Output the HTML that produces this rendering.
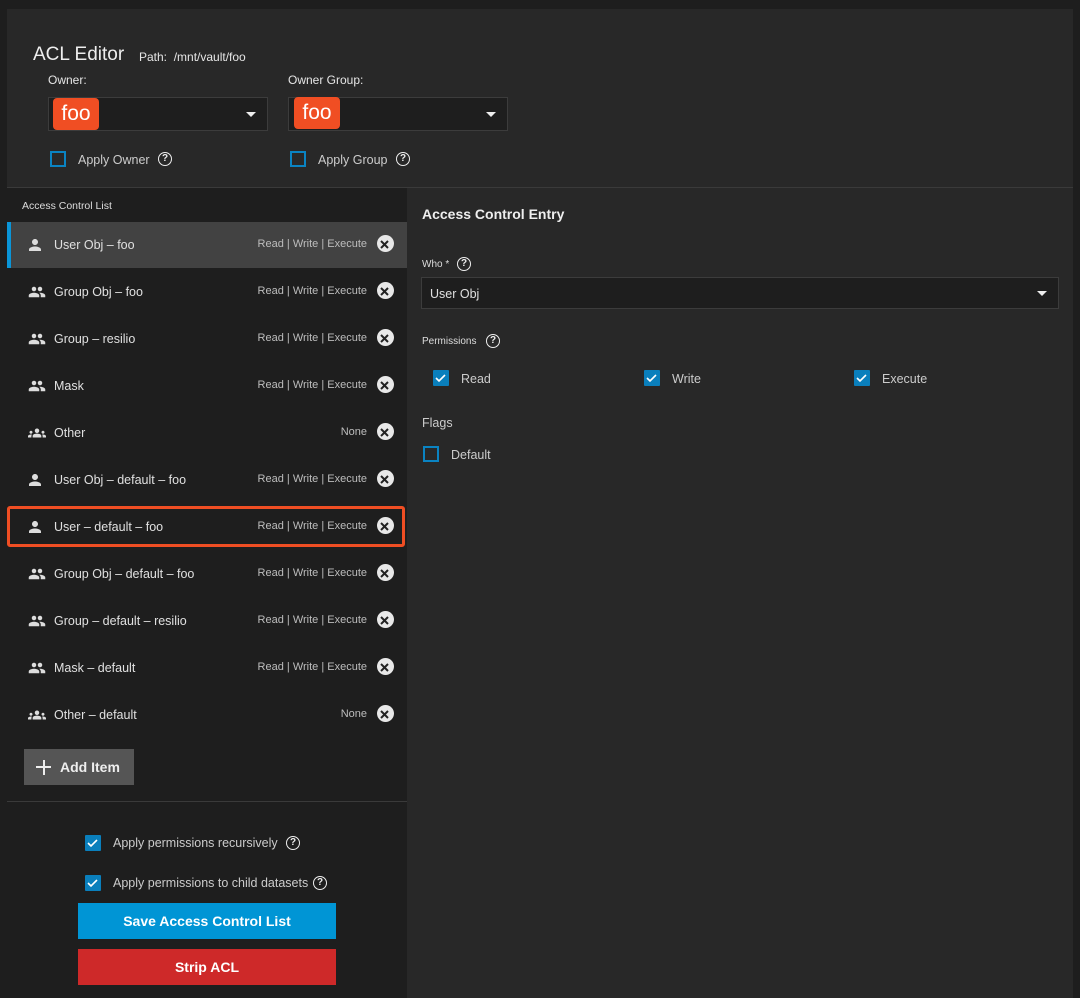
<!DOCTYPE html>
<html><head><meta charset="utf-8"><style>
*{box-sizing:border-box;margin:0;padding:0}
body{width:1080px;height:998px;background:#1e1e1e;font-family:"Liberation Sans",sans-serif;color:#e6e6e6;position:relative;overflow:hidden}
.a{position:absolute}
.panel{left:7px;top:9px;width:1066px;height:989px;background:#282828}
.sep{left:7px;top:187px;width:1066px;height:1px;background:#3a3a3a}
.left{left:7px;top:188px;width:400px;height:810px;background:#1e1e1e}
.sel{background:#1e1e1e;border:1px solid #3c3c3c}
.chip{background:#f04e23;color:#fff;font-size:21px;border-radius:4px;text-align:center;line-height:32px}
.cb{width:16px;height:16px;border:2px solid #0a83c2}
.cbc{width:16px;height:16px;background:#0a7fbc;border-radius:1px}
.row{left:7px;width:400px;height:46px;font-size:12.5px}
.row .ic{position:absolute;left:19px;top:14px}
.row .t{position:absolute;left:47px;top:16px;color:#e0e0e0}
.row .p{position:absolute;right:40px;top:16px;font-size:11px;color:#bdbdbd}
.row .x{position:absolute;right:13px;top:13px;width:17px;height:17px;border-radius:50%;background:#e8e8e8}
.q{width:14px;height:14px;border:1.6px solid #eee;border-radius:50%;font-size:10px;font-weight:bold;text-align:center;line-height:11px;color:#eee}
</style></head><body>
<div class="a panel"></div>
<div class="a" style="left:33px;top:44px;font-size:19px;color:#eee">ACL Editor</div>
<div class="a" style="left:139px;top:50px;font-size:12px">Path:&nbsp; /mnt/vault/foo</div>
<div class="a" style="left:48px;top:73px;font-size:12px">Owner:</div>
<div class="a" style="left:288px;top:73px;font-size:12px">Owner Group:</div>
<div class="a sel" style="left:48px;top:97px;width:220px;height:34px"></div>
<div class="a chip" style="left:53px;top:98px;width:46px;height:32px">foo</div>
<div class="a" style="left:246px;top:112px;border-left:5px solid transparent;border-right:5px solid transparent;border-top:5px solid #eee"></div>
<div class="a sel" style="left:288px;top:97px;width:220px;height:34px"></div>
<div class="a chip" style="left:294px;top:97px;width:46px;height:32px">foo</div>
<div class="a" style="left:486px;top:112px;border-left:5px solid transparent;border-right:5px solid transparent;border-top:5px solid #eee"></div>
<div class="a cb" style="left:50px;top:151px"></div>
<div class="a" style="left:78px;top:153px;font-size:12.5px;color:#ccc">Apply Owner</div>
<div class="a q" style="left:158px;top:152px">?</div>
<div class="a cb" style="left:290px;top:151px"></div>
<div class="a" style="left:318px;top:153px;font-size:12.5px;color:#ccc">Apply Group</div>
<div class="a q" style="left:396px;top:152px">?</div>
<div class="a sep"></div>
<div class="a left"></div>
<div class="a" style="left:22px;top:200px;font-size:10.5px;color:#ddd">Access Control List</div>

<div class="a row" style="top:222px;background:#424242"><div class="a" style="left:0;top:0;width:4px;height:46px;background:#0a95d8"></div><svg class="ic" width="18" height="18" viewBox="0 0 24 24"><path fill="#ddd" d="M12 12c2.2 0 4-1.8 4-4s-1.8-4-4-4-4 1.8-4 4 1.8 4 4 4zm0 2c-2.7 0-8 1.3-8 4v2h16v-2c0-2.7-5.3-4-8-4z"/></svg><span class="t">User Obj – foo</span><span class="p">Read | Write | Execute</span><span class="x"></span></div>

<div id="rows"></div>
<script></script>

<div class="a row" style="top:269px"><svg class="ic" width="22" height="18" viewBox="0 0 24 24"><path fill="#ddd" d="M16 11c1.7 0 3-1.3 3-3s-1.3-3-3-3-3 1.3-3 3 1.3 3 3 3zm-8 0c1.7 0 3-1.3 3-3S9.7 5 8 5 5 6.3 5 8s1.3 3 3 3zm0 2c-2.3 0-7 1.2-7 3.5V19h14v-2.5C15 14.2 10.3 13 8 13zm8 0c-.3 0-.6 0-1 .1 1.2.8 2 2 2 3.4V19h6v-2.5c0-2.3-4.7-3.5-7-3.5z"/></svg><span class="t">Group Obj – foo</span><span class="p">Read | Write | Execute</span><span class="x"></span></div>
<div class="a row" style="top:316px"><svg class="ic" width="22" height="18" viewBox="0 0 24 24"><path fill="#ddd" d="M16 11c1.7 0 3-1.3 3-3s-1.3-3-3-3-3 1.3-3 3 1.3 3 3 3zm-8 0c1.7 0 3-1.3 3-3S9.7 5 8 5 5 6.3 5 8s1.3 3 3 3zm0 2c-2.3 0-7 1.2-7 3.5V19h14v-2.5C15 14.2 10.3 13 8 13zm8 0c-.3 0-.6 0-1 .1 1.2.8 2 2 2 3.4V19h6v-2.5c0-2.3-4.7-3.5-7-3.5z"/></svg><span class="t">Group – resilio</span><span class="p">Read | Write | Execute</span><span class="x"></span></div>
<div class="a row" style="top:363px"><svg class="ic" width="22" height="18" viewBox="0 0 24 24"><path fill="#ddd" d="M16 11c1.7 0 3-1.3 3-3s-1.3-3-3-3-3 1.3-3 3 1.3 3 3 3zm-8 0c1.7 0 3-1.3 3-3S9.7 5 8 5 5 6.3 5 8s1.3 3 3 3zm0 2c-2.3 0-7 1.2-7 3.5V19h14v-2.5C15 14.2 10.3 13 8 13zm8 0c-.3 0-.6 0-1 .1 1.2.8 2 2 2 3.4V19h6v-2.5c0-2.3-4.7-3.5-7-3.5z"/></svg><span class="t">Mask</span><span class="p">Read | Write | Execute</span><span class="x"></span></div>
<div class="a row" style="top:410px"><svg class="ic" width="22" height="18" viewBox="0 0 24 24"><path fill="#ddd" d="M12 12.8c1.6 0 3.1.4 4.2.9 1 .5 1.6 1.4 1.6 2.5V18H6.2v-1.8c0-1.1.6-2 1.6-2.5 1.1-.5 2.5-.9 4.2-.9zM4 13c1.1 0 2-.9 2-2s-.9-2-2-2-2 .9-2 2 .9 2 2 2zm1.1 1.1C4.8 14 4.4 14 4 14c-1 0-1.9.2-2.8.6C.5 14.9 0 15.6 0 16.4V18h4.5v-1.6c0-.8.2-1.6.6-2.3zM20 13c1.1 0 2-.9 2-2s-.9-2-2-2-2 .9-2 2 .9 2 2 2zm4 3.4c0-.8-.5-1.5-1.2-1.8-.9-.4-1.8-.6-2.8-.6-.4 0-.8 0-1.1.1.4.7.6 1.5.6 2.3V18H24v-1.6zM12 6c1.7 0 3 1.3 3 3s-1.3 3-3 3-3-1.3-3-3 1.3-3 3-3z"/></svg><span class="t">Other</span><span class="p">None</span><span class="x"></span></div>
<div class="a row" style="top:457px"><svg class="ic" width="18" height="18" viewBox="0 0 24 24"><path fill="#ddd" d="M12 12c2.2 0 4-1.8 4-4s-1.8-4-4-4-4 1.8-4 4 1.8 4 4 4zm0 2c-2.7 0-8 1.3-8 4v2h16v-2c0-2.7-5.3-4-8-4z"/></svg><span class="t">User Obj – default – foo</span><span class="p">Read | Write | Execute</span><span class="x"></span></div>
<div class="a row" style="top:504px"><svg class="ic" width="18" height="18" viewBox="0 0 24 24"><path fill="#ddd" d="M12 12c2.2 0 4-1.8 4-4s-1.8-4-4-4-4 1.8-4 4 1.8 4 4 4zm0 2c-2.7 0-8 1.3-8 4v2h16v-2c0-2.7-5.3-4-8-4z"/></svg><span class="t">User – default – foo</span><span class="p">Read | Write | Execute</span><span class="x"></span></div>
<div class="a" style="left:7px;top:506px;width:398px;height:41px;border:3px solid #f04e23;border-radius:3px"></div>
<div class="a row" style="top:551px"><svg class="ic" width="22" height="18" viewBox="0 0 24 24"><path fill="#ddd" d="M16 11c1.7 0 3-1.3 3-3s-1.3-3-3-3-3 1.3-3 3 1.3 3 3 3zm-8 0c1.7 0 3-1.3 3-3S9.7 5 8 5 5 6.3 5 8s1.3 3 3 3zm0 2c-2.3 0-7 1.2-7 3.5V19h14v-2.5C15 14.2 10.3 13 8 13zm8 0c-.3 0-.6 0-1 .1 1.2.8 2 2 2 3.4V19h6v-2.5c0-2.3-4.7-3.5-7-3.5z"/></svg><span class="t">Group Obj – default – foo</span><span class="p">Read | Write | Execute</span><span class="x"></span></div>
<div class="a row" style="top:598px"><svg class="ic" width="22" height="18" viewBox="0 0 24 24"><path fill="#ddd" d="M16 11c1.7 0 3-1.3 3-3s-1.3-3-3-3-3 1.3-3 3 1.3 3 3 3zm-8 0c1.7 0 3-1.3 3-3S9.7 5 8 5 5 6.3 5 8s1.3 3 3 3zm0 2c-2.3 0-7 1.2-7 3.5V19h14v-2.5C15 14.2 10.3 13 8 13zm8 0c-.3 0-.6 0-1 .1 1.2.8 2 2 2 3.4V19h6v-2.5c0-2.3-4.7-3.5-7-3.5z"/></svg><span class="t">Group – default – resilio</span><span class="p">Read | Write | Execute</span><span class="x"></span></div>
<div class="a row" style="top:645px"><svg class="ic" width="22" height="18" viewBox="0 0 24 24"><path fill="#ddd" d="M16 11c1.7 0 3-1.3 3-3s-1.3-3-3-3-3 1.3-3 3 1.3 3 3 3zm-8 0c1.7 0 3-1.3 3-3S9.7 5 8 5 5 6.3 5 8s1.3 3 3 3zm0 2c-2.3 0-7 1.2-7 3.5V19h14v-2.5C15 14.2 10.3 13 8 13zm8 0c-.3 0-.6 0-1 .1 1.2.8 2 2 2 3.4V19h6v-2.5c0-2.3-4.7-3.5-7-3.5z"/></svg><span class="t">Mask – default</span><span class="p">Read | Write | Execute</span><span class="x"></span></div>
<div class="a row" style="top:692px"><svg class="ic" width="22" height="18" viewBox="0 0 24 24"><path fill="#ddd" d="M12 12.8c1.6 0 3.1.4 4.2.9 1 .5 1.6 1.4 1.6 2.5V18H6.2v-1.8c0-1.1.6-2 1.6-2.5 1.1-.5 2.5-.9 4.2-.9zM4 13c1.1 0 2-.9 2-2s-.9-2-2-2-2 .9-2 2 .9 2 2 2zm1.1 1.1C4.8 14 4.4 14 4 14c-1 0-1.9.2-2.8.6C.5 14.9 0 15.6 0 16.4V18h4.5v-1.6c0-.8.2-1.6.6-2.3zM20 13c1.1 0 2-.9 2-2s-.9-2-2-2-2 .9-2 2 .9 2 2 2zm4 3.4c0-.8-.5-1.5-1.2-1.8-.9-.4-1.8-.6-2.8-.6-.4 0-.8 0-1.1.1.4.7.6 1.5.6 2.3V18H24v-1.6zM12 6c1.7 0 3 1.3 3 3s-1.3 3-3 3-3-1.3-3-3 1.3-3 3-3z"/></svg><span class="t">Other – default</span><span class="p">None</span><span class="x"></span></div>

<div class="a" style="left:24px;top:749px;width:110px;height:36px;background:#555;color:#eee;font-size:14px;font-weight:bold;line-height:36px;padding-left:36px">Add Item</div>
<div class="a" style="left:36px;top:766px;width:15px;height:2px;background:#eee"></div>
<div class="a" style="left:42.5px;top:759.5px;width:2px;height:15px;background:#eee"></div>
<div class="a" style="left:7px;top:801px;width:400px;height:1px;background:#3a3a3a"></div>
<div class="a cbc" style="left:85px;top:835px"></div>
<div class="a" style="left:113px;top:836px;font-size:12.5px;color:#ccc">Apply permissions recursively</div>
<div class="a q" style="left:286px;top:836px">?</div>
<div class="a cbc" style="left:85px;top:875px"></div>
<div class="a" style="left:113px;top:876px;font-size:12.5px;color:#ccc">Apply permissions to child datasets</div>
<div class="a q" style="left:313px;top:876px">?</div>
<div class="a" style="left:78px;top:903px;width:258px;height:36px;background:#0095d5;color:#fff;font-weight:bold;font-size:14px;text-align:center;line-height:36px">Save Access Control List</div>
<div class="a" style="left:78px;top:949px;width:258px;height:36px;background:#ce2929;color:#fff;font-weight:bold;font-size:14px;text-align:center;line-height:36px">Strip ACL</div>

<div class="a" style="left:422px;top:206px;font-size:14px;font-weight:bold;color:#eee">Access Control Entry</div>
<div class="a" style="left:422px;top:259px;font-size:10px;color:#ddd">Who *</div>
<div class="a q" style="left:457px;top:257px">?</div>
<div class="a sel" style="left:421px;top:277px;width:638px;height:32px"></div>
<div class="a" style="left:430px;top:287px;font-size:12.5px;color:#e0e0e0">User Obj</div>
<div class="a" style="left:1037px;top:291px;border-left:5px solid transparent;border-right:5px solid transparent;border-top:5px solid #eee"></div>
<div class="a" style="left:422px;top:336px;font-size:10px;color:#ddd">Permissions</div>
<div class="a q" style="left:486px;top:334px">?</div>
<div class="a cbc" style="left:433px;top:370px"></div>
<div class="a" style="left:461px;top:372px;font-size:12.5px;color:#ccc">Read</div>
<div class="a cbc" style="left:644px;top:370px"></div>
<div class="a" style="left:672px;top:372px;font-size:12.5px;color:#ccc">Write</div>
<div class="a cbc" style="left:854px;top:370px"></div>
<div class="a" style="left:882px;top:372px;font-size:12.5px;color:#ccc">Execute</div>
<div class="a" style="left:422px;top:416px;font-size:12.5px;color:#ccc">Flags</div>
<div class="a cb" style="left:423px;top:446px"></div>
<div class="a" style="left:451px;top:448px;font-size:12.5px;color:#ccc">Default</div>

<svg class="a" style="left:0;top:0" width="1080" height="998">
<g stroke="#fff" stroke-width="1.6" fill="none">
<path d="M88 843l3 3 6-6M88 883l3 3 6-6M436 378l3 3 6-6M647 378l3 3 6-6M857 378l3 3 6-6"/>
</g>
<g stroke="#222" stroke-width="2">
<path d="M381 241l7 7m0-7l-7 7"/>
<path d="M381 288l7 7m0-7l-7 7"/>
<path d="M381 335l7 7m0-7l-7 7"/>
<path d="M381 382l7 7m0-7l-7 7"/>
<path d="M381 429l7 7m0-7l-7 7"/>
<path d="M381 476l7 7m0-7l-7 7"/>
<path d="M381 523l7 7m0-7l-7 7"/>
<path d="M381 570l7 7m0-7l-7 7"/>
<path d="M381 617l7 7m0-7l-7 7"/>
<path d="M381 664l7 7m0-7l-7 7"/>
<path d="M381 711l7 7m0-7l-7 7"/>
</g>
</svg>
</body></html>
